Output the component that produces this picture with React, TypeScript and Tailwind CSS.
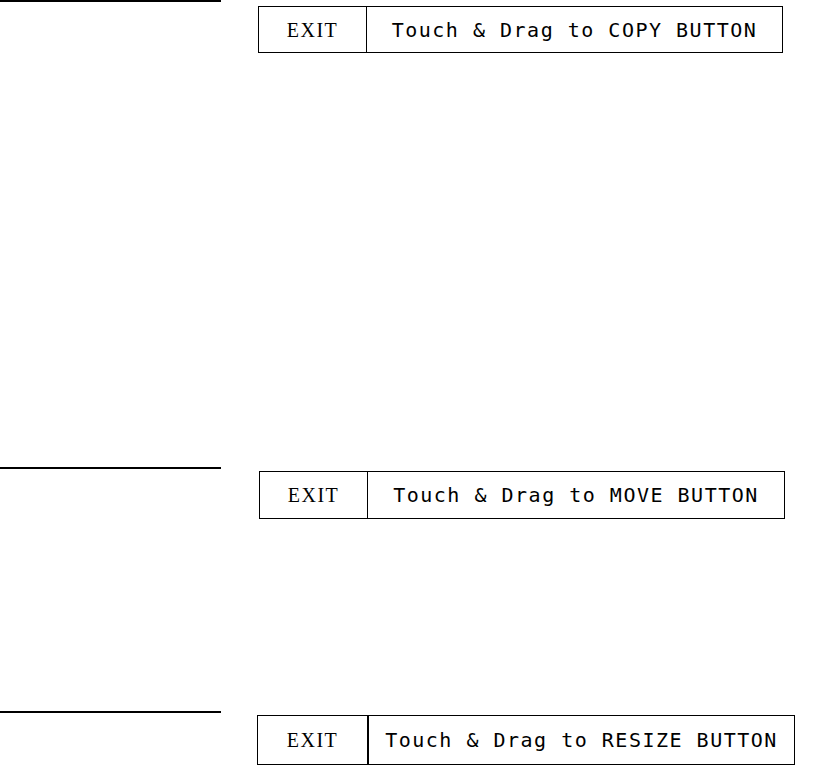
const mono = { fontFamily: '"DejaVu Sans Mono", "Liberation Mono", monospace' };

type Bar = {
  label: string;
  top: string;
  left: string;
  width: string;
  height: string;
  exitW: string;
  divider: string;
  gap: string;
};

const bars: Bar[] = [
  { label: "Touch & Drag to COPY BUTTON", top: "mt-[6px]", left: "ml-[37px]", width: "w-[525px]", height: "h-[47px]", exitW: "w-[108px]", divider: "border-r", gap: "mt-0" },
  { label: "Touch & Drag to MOVE BUTTON", top: "mt-[4px]", left: "ml-[38px]", width: "w-[526px]", height: "h-[48px]", exitW: "w-[108px]", divider: "border-r", gap: "mt-[414px]" },
  { label: "Touch & Drag to RESIZE BUTTON", top: "mt-[4px]", left: "ml-[36px]", width: "w-[538px]", height: "h-[50px]", exitW: "w-[111px]", divider: "border-r-2", gap: "mt-[192px]" },
];

function ToolBar({ b }: { b: Bar }) {
  return (
    <div className={`flex items-start ${b.gap}`}>
      <div className="w-[221px] h-[2px] bg-black shrink-0" />
      <div className={`flex ${b.top} ${b.left} ${b.width} ${b.height} border border-black bg-white`}>
        <div
          className={`${b.exitW} ${b.divider} border-black flex items-center justify-center text-[20px] tracking-[1.5px] text-black`}
          style={{ fontFamily: '"Liberation Serif", serif' }}
        >
          EXIT
        </div>
        <div
          className="flex-1 flex items-center justify-center text-[20px] tracking-[1.5px] text-black whitespace-pre"
          style={mono}
        >
          {b.label}
        </div>
      </div>
    </div>
  );
}

export default function App() {
  return (
    <div className="w-[821px] h-[770px] bg-white flex flex-col">
      {bars.map((b) => (
        <ToolBar key={b.label} b={b} />
      ))}
    </div>
  );
}
